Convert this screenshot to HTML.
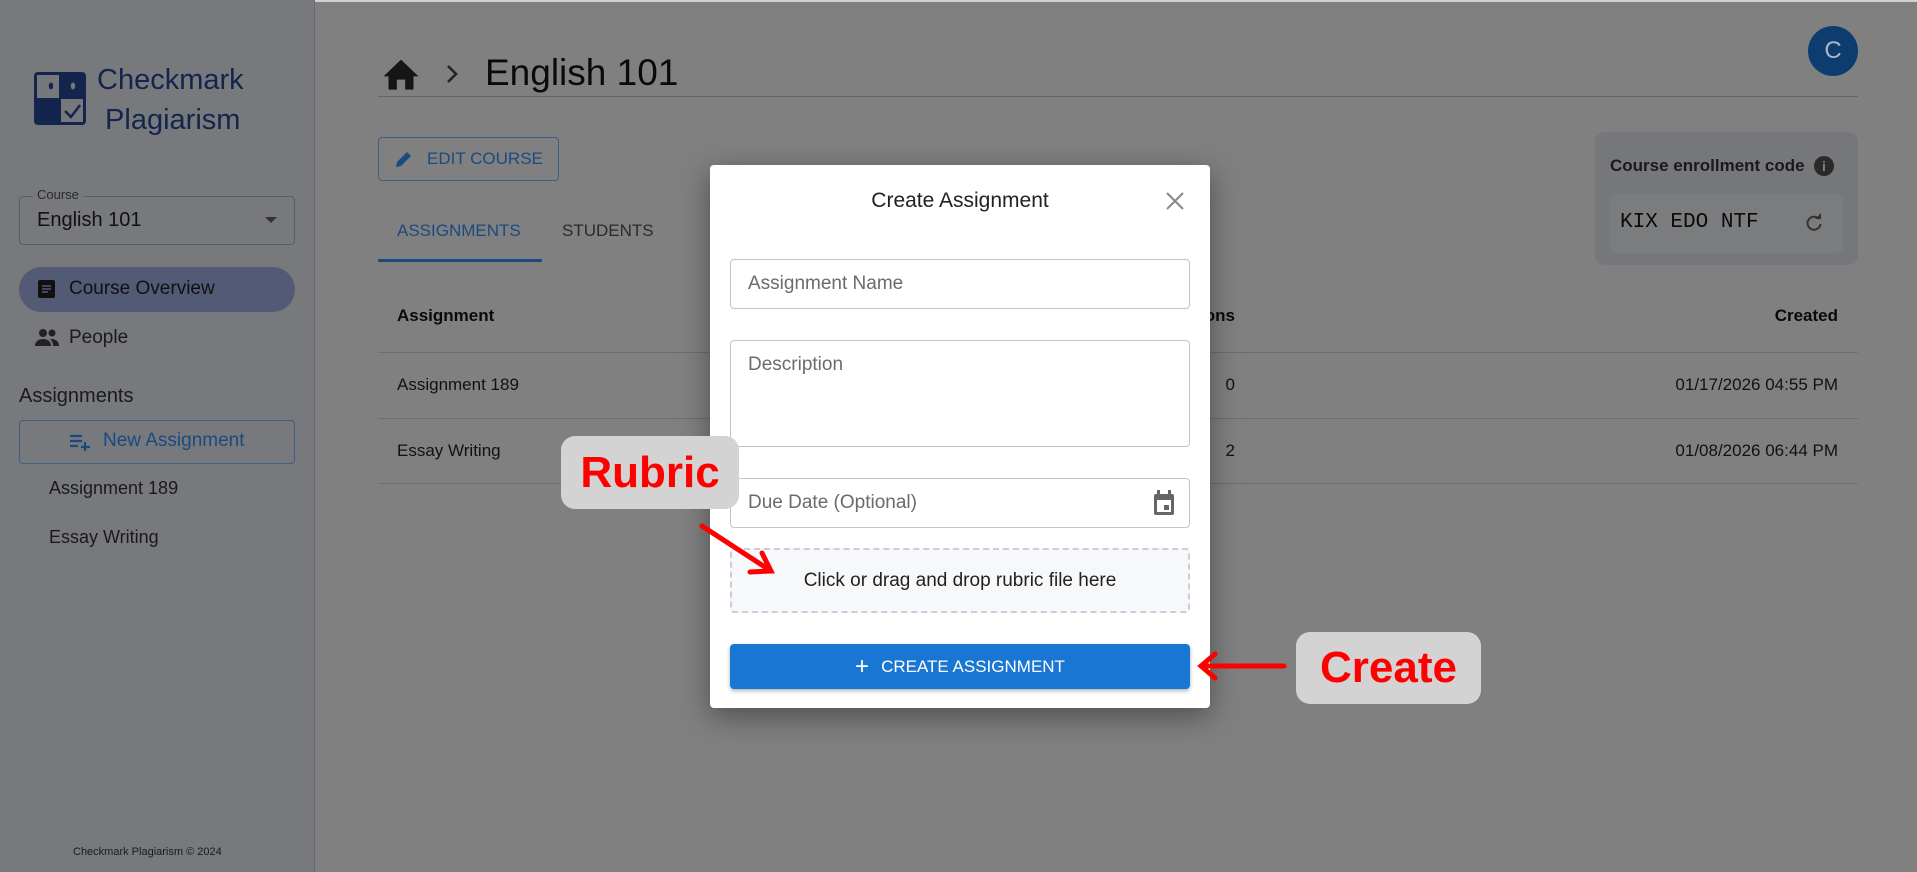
<!DOCTYPE html>
<html><head><meta charset="utf-8"><style>
*{box-sizing:border-box;margin:0;padding:0}
body{width:1917px;height:872px;position:relative;overflow:hidden;font-family:"Liberation Sans",Arial,sans-serif;background:#808080;color:#111}
.abs{position:absolute}
.side{left:0;top:0;width:315px;height:872px;background:#77797c;border-right:1px solid #6a6a6a}
.field{position:absolute;border:1px solid #c4c4c4;border-radius:4px;background:#fff}
.ph{position:absolute;left:17px;font-size:19px;color:#6b6b6b}
.lbl{position:absolute;background:#d3d3d3;border-radius:14px;color:#f00;font-family:"Liberation Sans",sans-serif;font-weight:bold;display:flex;align-items:center;justify-content:center}
.r{position:absolute;text-align:right}
</style></head><body>
<div class="abs" style="left:0;top:0;width:1917px;height:2px;background:#d0d0d0"></div>
<div class="abs side"></div>
<svg class="abs" style="left:33px;top:71px" width="54" height="55" viewBox="0 0 54 55">
<rect x="1" y="1" width="52" height="53" rx="4" fill="#14254d"/>
<rect x="4" y="4" width="22" height="23" fill="#76787b"/>
<rect x="28" y="28" width="22" height="23" fill="#76787b"/>
<ellipse cx="18" cy="15" rx="2.2" ry="3.5" fill="#14254d"/>
<ellipse cx="40" cy="15" rx="2.2" ry="3.5" fill="#76787b"/>
<path d="M32 40 L38 46 L47 34" stroke="#14254d" stroke-width="2.5" fill="none"/>
</svg>
<div class="abs" style="left:97px;top:60px;font-size:29px;line-height:40px;color:#14254d">Checkmark<br>&nbsp;Plagiarism</div>
<div class="abs" style="left:19px;top:196px;width:276px;height:49px;border:1px solid #5c5e61;border-radius:4px"></div>
<div class="abs" style="left:33px;top:187px;background:#77797c;padding:0 4px;font-size:13px;color:#2a2a2a">Course</div>
<div class="abs" style="left:37px;top:209px;font-size:20px;color:#111">English 101</div>
<div class="abs" style="left:265px;top:217px;width:0;height:0;border-left:6px solid transparent;border-right:6px solid transparent;border-top:6px solid #333"></div>
<div class="abs" style="left:19px;top:267px;width:276px;height:45px;border-radius:23px;background:#535a75"></div>
<svg class="abs" style="left:37px;top:279px" width="20" height="20" viewBox="0 0 20 20"><rect x="1" y="1" width="17" height="18" rx="2" fill="#111"/><path d="M5 7h9M5 10h9M5 13h6" stroke="#535a75" stroke-width="1.6"/></svg>
<div class="abs" style="left:69px;top:278px;font-size:19px;color:#111">Course Overview</div>
<svg class="abs" style="left:34px;top:327px" width="26" height="20" viewBox="0 0 26 20"><circle cx="9" cy="6" r="4" fill="#222"/><circle cx="18" cy="6" r="3.5" fill="#222"/><path d="M1 19c0-5 4-7 8-7s8 2 8 7z" fill="#222"/><path d="M16 12c4 0 9 1 9 7h-6c0-3-1-5-3-7z" fill="#222"/></svg>
<div class="abs" style="left:69px;top:327px;font-size:19px;color:#1a1a1a">People</div>
<div class="abs" style="left:19px;top:385px;font-size:20px;color:#1a1a1a">Assignments</div>
<div class="abs" style="left:19px;top:420px;width:276px;height:44px;border:1px solid #3d5f85;border-radius:4px"></div>
<svg class="abs" style="left:69px;top:432px" width="22" height="20" viewBox="0 0 22 20"><path d="M1 4h12M1 9h12M1 14h8M16 10v9M12 15h9" stroke="#1b4a80" stroke-width="2.2"/></svg>
<div class="abs" style="left:103px;top:430px;font-size:19px;color:#1b4a80">New Assignment</div>
<div class="abs" style="left:49px;top:478px;font-size:18px;color:#1a1a1a">Assignment 189</div>
<div class="abs" style="left:49px;top:527px;font-size:18px;color:#1a1a1a">Essay Writing</div>
<div class="abs" style="left:73px;top:846px;font-size:11px;color:#1a1a1a">Checkmark Plagiarism © 2024</div>
<svg class="abs" style="left:381px;top:56px" width="40" height="34" viewBox="0 0 24 20"><path d="M9.5 20v-6h5v6h5v-8h3L12 2 1.5 12h3v8z" fill="#161616"/></svg>
<svg class="abs" style="left:445px;top:63px" width="14" height="22" viewBox="0 0 14 22"><path d="M3 3l8 8-8 8" stroke="#222" stroke-width="2.6" fill="none"/></svg>
<div class="abs" style="left:485px;top:52px;font-size:37px;color:#0a0a0a">English 101</div>
<div class="abs" style="left:378px;top:96px;width:1480px;height:1px;background:#666"></div>
<div class="abs" style="left:1808px;top:26px;width:50px;height:50px;border-radius:50%;background:#0d3d6e;color:#a9b4c4;font-size:24px;text-align:center;line-height:50px">C</div>
<div class="abs" style="left:378px;top:137px;width:181px;height:44px;border:1px solid #3d5f85;border-radius:4px"></div>
<svg class="abs" style="left:394px;top:149px" width="20" height="20" viewBox="0 0 20 20"><path d="M2 18l1-5L13 3l4 4L7 17z" fill="#1b4a80"/></svg>
<div class="abs" style="left:427px;top:149px;font-size:17px;color:#1b4a80">EDIT COURSE</div>
<div class="abs" style="left:397px;top:221px;font-size:17px;color:#1b4a80">ASSIGNMENTS</div>
<div class="abs" style="left:562px;top:221px;font-size:17px;color:#2a2a2a">STUDENTS</div>
<div class="abs" style="left:378px;top:259px;width:164px;height:3px;background:#1b4a80"></div>
<div class="abs" style="left:1595px;top:132px;width:263px;height:133px;border-radius:10px;background:#76777a"></div>
<div class="abs" style="left:1610px;top:156px;font-size:17px;font-weight:bold;color:#1a1a1a">Course enrollment code</div>
<div class="abs" style="left:1814px;top:156px;width:20px;height:20px;border-radius:50%;background:#2a2a2a;color:#808080;font-size:14px;font-weight:bold;text-align:center;line-height:20px">i</div>
<div class="abs" style="left:1610px;top:194px;width:233px;height:59px;border-radius:6px;background:#7b7c7e"></div>
<div class="abs" style="left:1620px;top:211px;font-family:'Liberation Mono',monospace;font-size:21px;color:#0a0a0a">KIX EDO NTF</div>
<svg class="abs" style="left:1804px;top:213px" width="20" height="20" viewBox="0 0 20 20"><path d="M15 6A6.5 6.5 0 1 0 16.5 11" stroke="#333" stroke-width="2" fill="none"/><path d="M11 6h6V0z" fill="#333"/></svg>
<div class="abs" style="left:397px;top:306px;font-size:17px;font-weight:bold;color:#0a0a0a">Assignment</div>
<div class="r" style="right:682px;top:306px;font-size:17px;font-weight:bold;color:#0a0a0a">Submissions</div>
<div class="r" style="right:79px;top:306px;font-size:17px;font-weight:bold;color:#0a0a0a">Created</div>
<div class="abs" style="left:378px;top:352px;width:1480px;height:1px;background:#6e6e6e"></div>
<div class="abs" style="left:397px;top:375px;font-size:17px;color:#111">Assignment 189</div>
<div class="r" style="right:682px;top:375px;font-size:17px;color:#111">0</div>
<div class="r" style="right:79px;top:375px;font-size:17px;color:#111">01/17/2026 04:55 PM</div>
<div class="abs" style="left:378px;top:418px;width:1480px;height:1px;background:#6e6e6e"></div>
<div class="abs" style="left:397px;top:441px;font-size:17px;color:#111">Essay Writing</div>
<div class="r" style="right:682px;top:441px;font-size:17px;color:#111">2</div>
<div class="r" style="right:79px;top:441px;font-size:17px;color:#111">01/08/2026 06:44 PM</div>
<div class="abs" style="left:378px;top:483px;width:1480px;height:1px;background:#6e6e6e"></div>
<div class="abs" style="left:710px;top:165px;width:500px;height:543px;background:#fff;border-radius:4px;box-shadow:0 8px 30px rgba(0,0,0,0.4)">
<div class="abs" style="left:0;top:24px;width:500px;text-align:center;font-size:21px;color:#222">Create Assignment</div>
<svg class="abs" style="left:455px;top:26px" width="20" height="20" viewBox="0 0 20 20"><path d="M2 2l16 16M18 2L2 18" stroke="#888" stroke-width="2"/></svg>
<div class="field" style="left:20px;top:94px;width:460px;height:50px"><div class="ph" style="top:13px">Assignment Name</div></div>
<div class="field" style="left:20px;top:175px;width:460px;height:107px"><div class="ph" style="top:13px">Description</div></div>
<div class="field" style="left:20px;top:313px;width:460px;height:50px"><div class="ph" style="top:13px">Due Date (Optional)</div>
<svg class="abs" style="left:421px;top:11px" width="24" height="26" viewBox="0 0 24 26"><rect x="2" y="4" width="20" height="21" rx="2" fill="#666"/><rect x="5" y="10" width="14" height="12" fill="#fff"/><rect x="12" y="15" width="5" height="5" fill="#666"/><rect x="5" y="0" width="3" height="5" fill="#666"/><rect x="16" y="0" width="3" height="5" fill="#666"/></svg></div>
<div class="abs" style="left:20px;top:383px;width:460px;height:65px;border:2px dashed #ccd;border-radius:4px;background:#f7f8fa;text-align:center;line-height:61px;font-size:19px;color:#222">Click or drag and drop rubric file here</div>
<div class="abs" style="left:20px;top:479px;width:460px;height:45px;background:#1976d2;border-radius:4px;box-shadow:0 2px 4px rgba(0,0,0,0.3);color:#fff;font-size:17px;text-align:center;line-height:45px"><span style="font-size:24px;vertical-align:-2px;margin-right:12px">+</span>CREATE ASSIGNMENT</div>
</div>
<div class="lbl" style="left:561px;top:436px;width:178px;height:73px;font-size:44px">Rubric</div>
<svg class="abs" style="left:0;top:0" width="1917" height="872"><path d="M702 526L768 569M750 572L771 571L762 553" stroke="#f00" stroke-width="5" fill="none" stroke-linecap="round"/>
<path d="M1284 666L1202 666M1215 654L1201 666L1215 678" stroke="#f00" stroke-width="5" fill="none" stroke-linecap="round"/></svg>
<div class="lbl" style="left:1296px;top:632px;width:185px;height:72px;font-size:44px">Create</div>
</body></html>
